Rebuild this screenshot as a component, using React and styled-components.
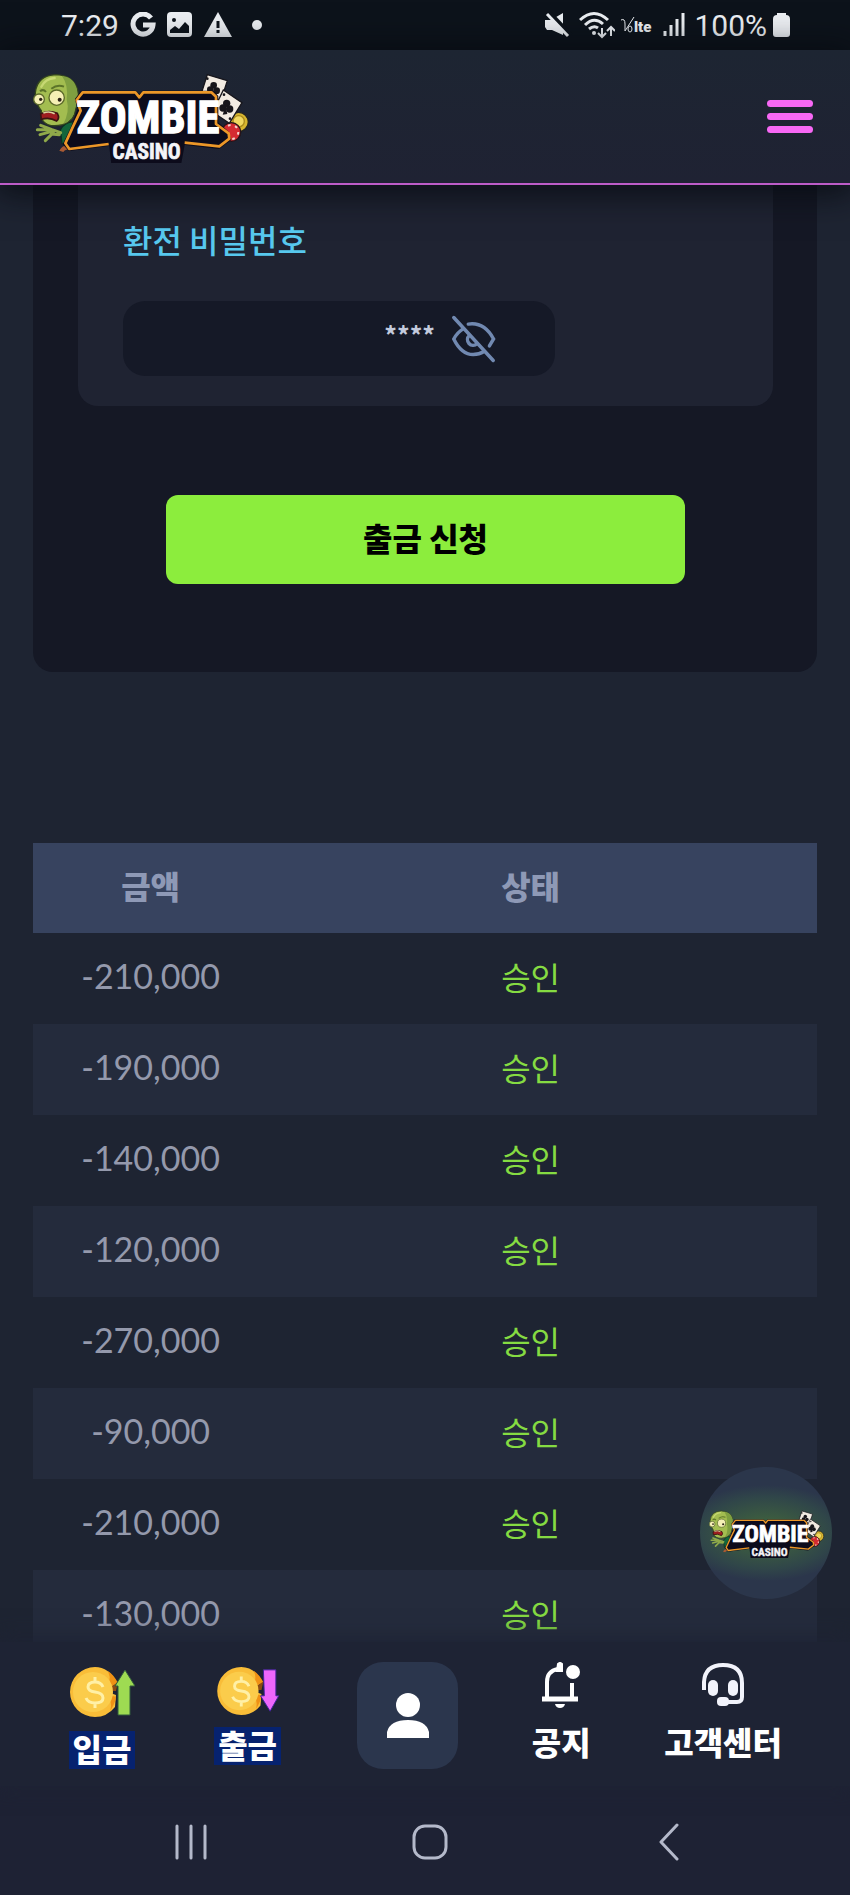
import React, { useState } from "react";
import styled, { createGlobalStyle } from "styled-components";

const GlobalStyle = createGlobalStyle`
  * {
    box-sizing: border-box;
  }
  body {
    margin: 0;
    background: #1e2432;
    font-family: "Noto Sans CJK KR", "Noto Sans", sans-serif;
  }
  button {
    border: 0;
    padding: 0;
    background: none;
    color: inherit;
    font: inherit;
    cursor: pointer;
  }
`;

const Screen = styled.div`
  position: relative;
  display: flex;
  flex-direction: column;
  height: 100vh;
`;

//status bar
const StatusBar = styled.div`
  display: flex;
  justify-content: space-between;
  align-items: center;
  flex: none;
  height: 50px;
  padding: 0 60px 0 61px;
  background: #0d131b;
  color: #eceff3;
  font-family: Roboto, sans-serif;
  font-size: 30px;
`;

const StatusGroup = styled.div`
  display: flex;
  align-items: center;
  gap: ${({ $gap }) => $gap}px;

  svg {
    display: block;
  }
`;

//header
const Header = styled.header`
  position: relative;
  z-index: 1;
  display: flex;
  justify-content: space-between;
  align-items: center;
  flex: none;
  height: 135px;
  padding: 0 37px 0 20px;
  background: linear-gradient(#1d2532, #1f2233);
  border-bottom: 2px solid #bd5cc8;
  box-shadow: 0 4px 32px 4px rgba(6, 9, 15, 0.85);
`;

const LogoLink = styled.a`
  display: block;

  svg {
    display: block;
  }
`;

const MenuButton = styled.button`
  display: flex;
  flex-direction: column;
  gap: 6px;
  width: 46px;
`;

const MenuBar = styled.span`
  height: 7px;
  border-radius: 4px;
  background: #f768f5;
`;

//content
const Content = styled.main`
  flex: 1;
  min-height: 0;
  padding: 0 33px;
  overflow-y: auto;
  scrollbar-width: none;
`;

const Panel = styled.form`
  padding: 0 44px 88px 45px;
  border-radius: 0 0 20px 20px;
  background: #151825;
`;

const Card = styled.div`
  padding: 34px 45px 30px;
  border-radius: 0 0 20px 20px;
  background: #1f2332;
`;

const FieldLabel = styled.label`
  display: block;
  margin-bottom: 42px;
  color: #57c8ee;
  font-size: 32px;
  font-weight: 500;
  line-height: 40px;
`;

const Field = styled.div`
  display: flex;
  align-items: center;
  gap: 16px;
  max-width: 432px;
  height: 75px;
  padding: 0 59px 0 24px;
  border-radius: 22px;
  background: #151927;
`;

const PasswordInput = styled.input`
  flex: 1;
  min-width: 0;
  padding: 0 0 10px;
  border: 0;
  outline: 0;
  background: none;
  color: #c3cadd;
  font: 700 25px "Noto Sans CJK KR", sans-serif;
  text-align: right;
`;

const EyeButton = styled.button`
  flex: none;
  height: 48px;

  svg {
    display: block;
  }
`;

const SubmitRow = styled.div`
  display: flex;
  padding: 89px 88px 0;
`;

const SubmitButton = styled.button`
  flex: 1;
  height: 89px;
  padding-bottom: 6px;
  border-radius: 12px;
  background: #8ced3d;
  color: #000;
  font-size: 32px;
  font-weight: 900;
`;

const HistoryTable = styled.table`
  width: 100%;
  margin-top: 171px;
  border-collapse: collapse;
  table-layout: fixed;
  text-align: center;

  th,
  td {
    padding: 0 0 6px;
  }
  th:last-child,
  td:last-child {
    width: 70%;
    padding-right: 24px;
  }
`;

const HeadRow = styled.tr`
  height: 90px;
  background: #37435f;
  color: #8e99b6;
  font-size: 32px;
`;

const HeadCell = styled.th`
  font-weight: 900;
`;

const Row = styled.tr`
  height: 91px;

  &:nth-child(even) {
    background: #242b3c;
  }
`;

const Amount = styled.td`
  color: #9499ac;
  font-family: Lato, sans-serif;
  font-size: 34px;
`;

const Status = styled.td`
  color: #85db42;
  font-size: 32px;
`;

const ChatButton = styled.button`
  position: absolute;
  right: 18px;
  bottom: 296px;
  z-index: 2;
  display: flex;
  justify-content: center;
  align-items: center;
  width: 132px;
  height: 132px;
  border-radius: 50%;
  background: radial-gradient(
    ellipse 88px 48px,
    #3c5c40 30%,
    #304649 75%,
    #2b364b 100%
  );
`;

//bottom navigation
const BottomNav = styled.nav`
  position: relative;
  z-index: 1;
  display: flex;
  justify-content: space-between;
  align-items: flex-start;
  flex: none;
  height: 144px;
  padding: 20px 68px 0 66px;
  background: #1e2334;
  box-shadow: 0 -2px 20px 2px #1e2334;
`;

const NavItem = styled.button`
  display: flex;
  flex-direction: column;
  align-items: center;
  gap: ${({ $money }) => ($money ? 11 : 16)}px;
  min-width: ${({ $money }) => ($money ? 72 : 0)}px;
  padding-top: ${({ $money }) => ($money ? 4 : 0)}px;
  color: #fff;

  svg {
    display: block;
  }
`;

const NavLabel = styled.span`
  padding: 0 ${({ $marked }) => ($marked ? 4 : 0)}px 4px;
  background: ${({ $marked }) => ($marked ? "#06226f" : "none")};
  font-size: 32px;
  font-weight: 900;
  line-height: 34px;
`;

const ProfileButton = styled.button`
  display: flex;
  justify-content: center;
  align-items: center;
  width: 101px;
  height: 107px;
  border-radius: 26px;
  background: #2b364d;
`;

const SystemNav = styled.div`
  display: grid;
  grid-template-columns: repeat(3, 1fr);
  align-items: center;
  justify-items: center;
  flex: none;
  height: 109px;
  padding: 2px 62px 0 71px;
  background: #1e2234;
`;

const SystemButton = styled.button`
  svg {
    display: block;
  }
`;

const history = [
  "-210,000",
  "-190,000",
  "-140,000",
  "-120,000",
  "-270,000",
  "-90,000",
  "-210,000",
  "-130,000"
];

const logoFont = "'Roboto Condensed', 'Liberation Sans Narrow', Roboto, sans-serif";

function Logo({ width }) {
  return (
    <svg
      width={width}
      height={Math.round((width * 110) / 240)}
      viewBox="0 0 720 330"
      role="img"
      aria-label="Zombie Casino"
    >
      {/* cards and chips */}
      <circle cx="656" cy="180" r="29" fill="#d8b62f" stroke="#222" strokeWidth="4" />
      <circle cx="656" cy="178" r="17" fill="#f1d860" stroke="#a98a1c" strokeWidth="4" />
      <circle cx="634" cy="210" r="28" fill="#d52b31" stroke="#251318" strokeWidth="4" />
      <circle cx="634" cy="210" r="21" fill="none" stroke="#f3d6cf" strokeWidth="6" strokeDasharray="8 14" />
      <path d="M562 38 622 56 602 118 544 94Z" fill="#f2ebe2" stroke="#17161c" strokeWidth="4" />
      <path d="M610 84 666 122 628 184 578 150Z" fill="#f2ebe2" stroke="#17161c" strokeWidth="4" />
      <g fill="#17151a">
        <circle cx="581" cy="70" r="10" />
        <circle cx="571" cy="83" r="10" />
        <circle cx="590" cy="86" r="10" />
        <path d="M578 82 573 104 584 104Z" />
        <circle cx="620" cy="124" r="11" />
        <circle cx="609" cy="138" r="11" />
        <circle cx="629" cy="141" r="11" />
        <path d="M617 132 608 158 622 156Z" />
        <circle cx="562" cy="50" r="4" />
        <circle cx="612" cy="98" r="4" />
        <circle cx="630" cy="170" r="4" />
      </g>
      {/* zombie */}
      <path d="M121 204Q135 178 162 180L152 250 126 244Z" fill="#12663b" stroke="#0c2f22" strokeWidth="4" />
      <path
        d="M46 92Q52 40 108 38Q160 40 173 84Q178 112 166 142Q164 176 128 188Q88 198 70 178Q62 168 64 146Q46 124 46 92Z"
        fill="#a3bd50"
        stroke="#33451d"
        strokeWidth="4"
      />
      <path d="M126 42Q164 46 171 84Q176 112 165 142Q162 174 130 186Q150 150 140 112Q146 70 126 42Z" fill="#7f9f40" />
      <path d="M64 74Q76 50 104 48" stroke="#c7d873" strokeWidth="7" fill="none" strokeLinecap="round" />
      <path d="M60 88Q70 80 78 90M94 80Q112 66 132 74" stroke="#5c7429" strokeWidth="6" fill="none" />
      <circle cx="57" cy="112" r="16" fill="#f5f0b5" stroke="#5c6a2b" strokeWidth="4" />
      <circle cx="110" cy="107" r="23" fill="#f5f0b5" stroke="#5c6a2b" strokeWidth="4" />
      <circle cx="62" cy="112" r="5" fill="#2d2419" />
      <circle cx="119" cy="113" r="6" fill="#2d2419" />
      <path d="M62 156Q84 142 112 154Q120 168 110 177Q88 164 64 172Z" fill="#9f1d20" stroke="#3c1312" strokeWidth="5" />
      <path d="M70 153Q88 146 104 155" stroke="#ddd3a0" strokeWidth="5" fill="none" />
      <path
        d="M122 212 96 203 62 190M94 203 52 203M96 208 60 218M100 212 76 236M118 218 94 216"
        stroke="#8fa94a"
        strokeWidth="9"
        strokeLinecap="round"
        fill="none"
      />
      <path d="M118 266Q128 246 152 252L154 262Q136 260 130 270Z" fill="#a85a34" />
      {/* sign */}
      <path
        d="M186 91 346 91 358 103 370 91 578 91 590 104 590 184 622 212 628 232 596 256 490 243 480 298 278 298 272 246 148 262 134 246 158 196 178 142 170 112Z"
        fill="#0c0b1b"
        stroke="#0c0b1b"
        strokeWidth="10"
      />
      <path
        d="M266 246 148 261 136 244 158 196 182 146 170 114 188 91 346 91 358 106 370 91 574 91 588 104 588 186 626 214 628 230 598 253 494 242"
        fill="none"
        stroke="#ec9728"
        strokeWidth="8"
        strokeLinejoin="round"
      />
      <text
        x="384"
        y="214"
        fill="#fff"
        stroke="#fff"
        strokeWidth="4"
        textAnchor="middle"
        fontFamily={logoFont}
        fontSize="134"
        fontWeight="700"
      >
        ZOMBIE
      </text>
      <text
        x="380"
        y="290"
        fill="#f4f4f8"
        stroke="#f4f4f8"
        strokeWidth="2"
        textAnchor="middle"
        fontFamily={logoFont}
        fontSize="64"
        fontWeight="700"
      >
        CASINO
      </text>
    </svg>
  );
}

function CoinIcon({ direction }) {
  const up = direction === "up";
  return (
    <svg width="66" height={up ? 54 : 50} viewBox={up ? "0 0 66 54" : "0 0 66 52"} aria-hidden="true">
      <path d="M26 1A25 25 0 1 0 26 51Q38 51 46 41L47 29 36 25 48 17Q40 1 26 1Z" fill="#f9bd38" />
      <path d="M39 5Q45 9 49 17L37 23 35 27 47 31Q46 38 41 45Q45 34 34 27Q44 16 39 5Z" fill="#ef9115" />
      <path d="M36 25 49 16 47 25Z" fill="#8a4a14" />
      <circle cx="24" cy="26" r="20" fill="#fbcc4b" />
      <path
        d="M34 21Q32 16 26 16Q19 16 19 21Q19 25 26 26Q34 27 34 32Q34 37 26 37Q19 37 17 32M26 11V16M26 37V42"
        fill="none"
        stroke="#fff0a6"
        strokeWidth="3"
      />
      {up ? (
        <path d="M56 4 66 20H61V49H49V20H46Z" fill="#9edb52" stroke="#315b3d" strokeWidth="1" />
      ) : (
        <path d="M49 4H62V31H65L56 47 46 31H50Z" fill="#ee66fb" stroke="#40239a" strokeWidth="1" />
      )}
    </svg>
  );
}

function BellIcon() {
  return (
    <svg width="40" height="46" viewBox="0 0 40 46" aria-hidden="true">
      <path d="M6 36V20Q6 9 17 7M31 21V36" fill="none" stroke="#fff" strokeWidth="4" />
      <path d="M1 37H37" stroke="#fff" strokeWidth="5" />
      <path d="M17 2Q19 0 21 2V9H16Z" fill="#fff" stroke="#fff" strokeWidth="2" />
      <circle cx="32" cy="10" r="7" fill="#fff" />
      <path d="M14 42H24Q23 46 19 46Q15 46 14 42Z" fill="#fff" />
    </svg>
  );
}

function HeadsetIcon() {
  return (
    <svg width="44" height="46" viewBox="0 0 44 46" aria-hidden="true">
      <path d="M3 28V20Q4 3 22 3Q41 3 41 21V35Q41 40 36 40H24" fill="none" stroke="#f2f3fb" strokeWidth="4" />
      <rect x="7" y="18" width="10" height="16" rx="5" fill="#f2f3fb" />
      <rect x="27" y="18" width="10" height="16" rx="5" fill="#f2f3fb" />
      <rect x="16" y="35" width="12" height="9" rx="4" fill="#f2f3fb" />
    </svg>
  );
}

export default function App() {
  const [password, setPassword] = useState("****");

  return (
    <>
      <GlobalStyle />
      <Screen>
        <StatusBar>
          <StatusGroup $gap={11}>
            <span>7:29</span>
            <svg width="26" height="26" viewBox="0 0 26 26">
              <path d="M21 6A10 10 0 1 0 23 13H13" fill="none" stroke="#eceff3" strokeWidth="5" />
            </svg>
            <svg width="26" height="26" viewBox="0 0 26 26">
              <rect width="25" height="25" x="0" y="0" rx="4" fill="#eceff3" />
              <circle cx="7" cy="8" r="2" fill="#0d131b" />
              <path d="M3 21V18L8 14 12 17 18 10 22 14V21Z" fill="#0d131b" />
            </svg>
            <svg width="28" height="26" viewBox="0 0 28 26">
              <path d="M14 0 28 25H0Z" fill="#eceff3" />
              <path d="M14 9V16M14 18V21" stroke="#0d131b" strokeWidth="3" />
            </svg>
            <svg width="28" height="26" viewBox="0 0 28 26">
              <circle cx="14" cy="13" r="5" fill="#eceff3" />
            </svg>
          </StatusGroup>
          <StatusGroup $gap={6}>
            <svg width="28" height="26" viewBox="0 0 28 26">
              <path d="M0 8H6L18 1V23L7 18H2L0 15Z" fill="#eceff3" />
              <path d="M4 0 26 23" stroke="#0d131b" strokeWidth="4" />
              <path d="M2 2 23 24" stroke="#eceff3" strokeWidth="3" />
            </svg>
            <svg width="36" height="28" viewBox="0 0 36 28">
              <path d="M1 9Q15-4 29 9M6 14Q15 5 24 13M10 18Q15 14 19 17" fill="none" stroke="#eceff3" strokeWidth="3" />
              <circle cx="15" cy="22" r="2" fill="#eceff3" />
              <path d="M23 17V26M19 22 23 26 27 22M32 25V16M28 20 32 16 36 20" fill="none" stroke="#eceff3" strokeWidth="2" />
            </svg>
            <svg width="34" height="26" viewBox="0 0 34 26" role="img" aria-label="VoLTE">
              <path d="M0 8Q4 6 4 12V19L13 5" fill="none" stroke="#eceff3" strokeWidth="1" />
              <ellipse cx="9" cy="17" rx="2" ry="3" fill="none" stroke="#eceff3" />
              <text x="13" y="20" fill="#eceff3" fontFamily="Roboto, sans-serif" fontSize="15" fontWeight="900">
                lte
              </text>
            </svg>
            <svg width="27" height="26" viewBox="0 0 27 26">
              <path d="M4 19V24M10 13V24M16 7V24M22 1V24" stroke="#eceff3" strokeWidth="3" />
            </svg>
            <span>100%</span>
            <svg width="17" height="26" viewBox="0 0 17 26">
              <path d="M4 3V1H13V3Q17 3 17 7V22Q17 25 14 25H3Q0 25 0 22V7Q0 3 4 3Z" fill="#eceff3" />
            </svg>
          </StatusGroup>
        </StatusBar>

        <Header>
          <LogoLink href="#home">
            <Logo width={240} />
          </LogoLink>
          <MenuButton type="button" aria-label="메뉴">
            <MenuBar />
            <MenuBar />
            <MenuBar />
          </MenuButton>
        </Header>

        <Content>
          <Panel onSubmit={e => e.preventDefault()}>
            <Card>
              <FieldLabel htmlFor="password">환전 비밀번호</FieldLabel>
              <Field>
                <PasswordInput
                  id="password"
                  type="text"
                  value={password}
                  onChange={e => setPassword(e.target.value)}
                />
                <EyeButton type="button" aria-label="비밀번호 표시">
                  <svg
                    width="45"
                    height="48"
                    viewBox="0 0 130 138"
                    fill="none"
                    stroke="#7189b1"
                    strokeWidth="10"
                    strokeLinecap="round"
                  >
                    <path d="M8 7 122 131" />
                    <path d="M50 26Q96 19 123 69L111 89" />
                    <path d="M36 39Q18 50 8 69Q30 114 64 114Q82 114 94 106" />
                    <path d="M53 59A16 16 0 1 0 75 83" />
                  </svg>
                </EyeButton>
              </Field>
            </Card>
            <SubmitRow>
              <SubmitButton type="submit">출금 신청</SubmitButton>
            </SubmitRow>
          </Panel>

          <HistoryTable>
            <thead>
              <HeadRow>
                <HeadCell>금액</HeadCell>
                <HeadCell>상태</HeadCell>
              </HeadRow>
            </thead>
            <tbody>
              {history.map((amount, i) => (
                <Row key={i}>
                  <Amount>{amount}</Amount>
                  <Status>승인</Status>
                </Row>
              ))}
            </tbody>
          </HistoryTable>
        </Content>

        <ChatButton type="button" aria-label="Zombie Casino">
          <Logo width={128} />
        </ChatButton>

        <BottomNav>
          <NavItem type="button" $money>
            <CoinIcon direction="up" />
            <NavLabel $marked>입금</NavLabel>
          </NavItem>
          <NavItem type="button" $money>
            <CoinIcon direction="down" />
            <NavLabel $marked>출금</NavLabel>
          </NavItem>
          <ProfileButton type="button" aria-label="내 정보">
            <svg width="42" height="46" viewBox="0 0 42 46" fill="#fff">
              <circle cx="21" cy="12" r="12" />
              <path d="M0 45V39Q3 27 21 27Q39 27 42 39V45Z" />
            </svg>
          </ProfileButton>
          <NavItem type="button">
            <BellIcon />
            <NavLabel>공지</NavLabel>
          </NavItem>
          <NavItem type="button">
            <HeadsetIcon />
            <NavLabel>고객센터</NavLabel>
          </NavItem>
        </BottomNav>

        <SystemNav>
          <SystemButton type="button" aria-label="최근 앱">
            <svg width="36" height="36" viewBox="0 0 36 36">
              <path d="M4 2V34M18 2V34M32 2V34" stroke="#b4b9ca" strokeWidth="3" strokeLinecap="round" />
            </svg>
          </SystemButton>
          <SystemButton type="button" aria-label="홈">
            <svg width="36" height="36" viewBox="0 0 36 36">
              <rect x="2" y="2" width="32" height="32" rx="11" fill="none" stroke="#b4b9ca" strokeWidth="3" />
            </svg>
          </SystemButton>
          <SystemButton type="button" aria-label="뒤로">
            <svg width="22" height="38" viewBox="0 0 22 38">
              <path d="M19 2 3 19 19 36" fill="none" stroke="#b4b9ca" strokeWidth="3" strokeLinecap="round" strokeLinejoin="round" />
            </svg>
          </SystemButton>
        </SystemNav>
      </Screen>
    </>
  );
}
